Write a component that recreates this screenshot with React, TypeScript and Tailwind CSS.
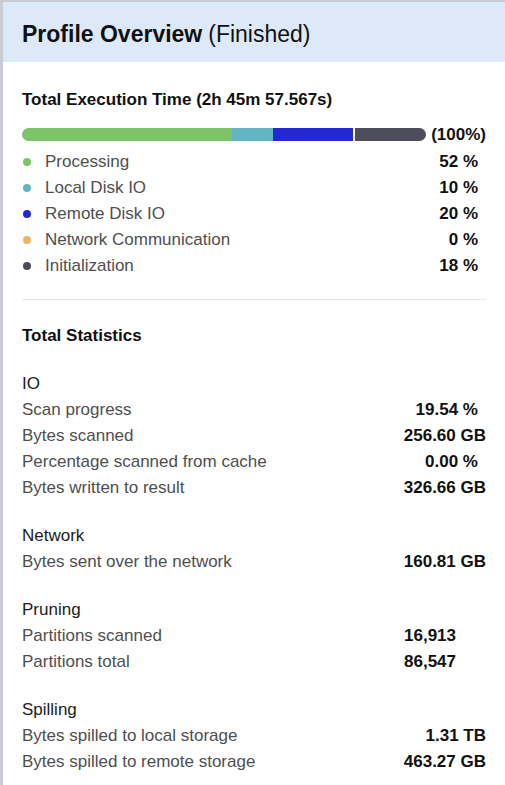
import React from 'react';

type Part = { label: string; pct: number; color: string };

const parts: Part[] = [
  { label: 'Processing', pct: 52, color: '#7cc467' },
  { label: 'Local Disk IO', pct: 10, color: '#63b5c4' },
  { label: 'Remote Disk IO', pct: 20, color: '#2428d2' },
  { label: 'Network Communication', pct: 0, color: '#e9b46c' },
  { label: 'Initialization', pct: 18, color: '#4d4d5b' },
];

type Row = { label: string; value: string; pad?: string };
type Group = { title: string; rows: Row[] };

// pad keeps the values where the original table put them ("%" sits a bit left of "GB")
const groups: Group[] = [
  {
    title: 'IO',
    rows: [
      { label: 'Scan progress', value: '19.54 %', pad: 'pr-[8px]' },
      { label: 'Bytes scanned', value: '256.60 GB' },
      { label: 'Percentage scanned from cache', value: '0.00 %', pad: 'pr-[8px]' },
      { label: 'Bytes written to result', value: '326.66 GB' },
    ],
  },
  {
    title: 'Network',
    rows: [{ label: 'Bytes sent over the network', value: '160.81 GB' }],
  },
  {
    title: 'Pruning',
    rows: [
      { label: 'Partitions scanned', value: '16,913', pad: 'pr-[30px]' },
      { label: 'Partitions total', value: '86,547', pad: 'pr-[30px]' },
    ],
  },
  {
    title: 'Spilling',
    rows: [
      { label: 'Bytes spilled to local storage', value: '1.31 TB' },
      { label: 'Bytes spilled to remote storage', value: '463.27 GB' },
    ],
  },
];

function TimeBar() {
  const shown = parts.filter((p) => p.pct > 0);
  return (
    <div className="mt-[17px] flex h-[14px] items-center gap-[5px]">
      <div className="flex h-[13px] flex-1 overflow-hidden rounded-full bg-white">
        {shown.map((p, i) => (
          <div
            key={p.label}
            className={i === shown.length - 1 ? 'h-full border-l-2 border-white' : 'h-full'}
            style={{ width: `${p.pct}%`, backgroundColor: p.color }}
          />
        ))}
      </div>
      <span className="text-[17px] font-bold leading-none text-[#111]">(100%)</span>
    </div>
  );
}

export default function App() {
  return (
    <div className="h-[785px] w-[505px] overflow-hidden bg-white font-['Liberation_Sans',Arial,sans-serif]">
      <div className="h-full border-l-[3px] border-t-2 border-[#c9ccd5]">
        <div className="flex h-[60px] items-center bg-[#dde9f8] pl-[19px] pt-1 text-[23px] text-[#111]">
          <span className="font-bold">Profile Overview</span>
          <span className="ml-[6px]">(Finished)</span>
        </div>

        <div className="pl-[19px] pr-[19px]">
          <div className="mt-[28px] text-[17px] font-bold leading-[20px] text-[#111]">
            Total Execution Time (2h 45m 57.567s)
          </div>

          <TimeBar />

          <div className="mt-[8px]">
            {parts.map((p) => (
              <div key={p.label} className="flex h-[26px] items-center text-[17px]">
                <span
                  className="ml-[1px] h-2 w-2 shrink-0 rounded-full"
                  style={{ backgroundColor: p.color }}
                />
                <span className="ml-[14px] flex-1 text-[#4f4f4f]">{p.label}</span>
                <span className="pr-[8px] font-bold text-[#111]">{p.pct} %</span>
              </div>
            ))}
          </div>

          <div className="mt-[20px] border-t border-[#e6e8f0]" />

          <div className="mt-[23px] text-[17px] font-bold leading-[26px] text-[#111]">
            Total Statistics
          </div>

          {groups.map((g) => (
            <div key={g.title} className="mt-[22px] text-[17px] leading-[26px]">
              <div className="text-[#1c1c1c]">{g.title}</div>
              {g.rows.map((r) => (
                <div key={r.label} className="flex items-center justify-between">
                  <span className="text-[#4f4f4f]">{r.label}</span>
                  <span className={`font-bold text-[#111] ${r.pad ?? ''}`}>{r.value}</span>
                </div>
              ))}
            </div>
          ))}
        </div>
      </div>
    </div>
  );
}
